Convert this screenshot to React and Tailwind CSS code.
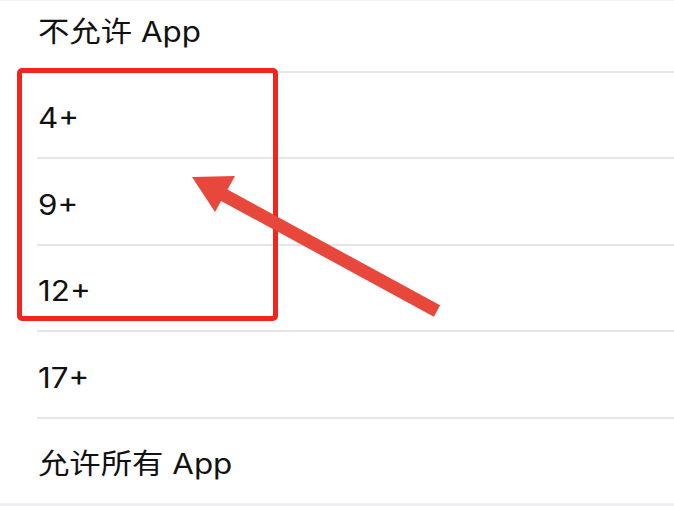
import React from "react";

const rows = ["不允许 App", "4+", "9+", "12+", "17+", "允许所有 App"];

const Row = ({ label, last }) => (
  <div>
    <div className="h-[84.5px] flex items-center pl-[38px] pt-[7px]">
      <span className="inline-block origin-left scale-x-[1.12] text-[28px] leading-none text-[#111111]">
        {label}
      </span>
    </div>
    {!last && <div className="ml-[37px] h-[2px] bg-[#e6e6e8]" />}
  </div>
);

export default function App() {
  return (
    <div className="relative h-[506px] w-full overflow-hidden bg-white font-['Inter','Noto_Sans_CJK_SC',sans-serif]">
      <div className="h-px bg-[#f3f3f5]" />
      <div className="-mt-[15px]">
        {rows.map((r, i) => (
          <Row key={r} label={r} last={i === rows.length - 1} />
        ))}
      </div>
      <div className="h-[10px] bg-[#efeff3]" />

      {/* annotation */}
      <div className="absolute left-[17px] top-[68px] h-[253px] w-[261px] rounded-[5px] border-[5px] border-[#f4241c]" />
      <svg
        className="absolute left-0 top-0"
        width="674"
        height="506"
        viewBox="0 0 674 506"
      >
        <line
          x1="437"
          y1="311"
          x2="222"
          y2="194"
          stroke="#e8483b"
          strokeWidth="13"
        />
        <polygon points="192,177 235,176 215,212" fill="#e8483b" />
      </svg>
    </div>
  );
}
